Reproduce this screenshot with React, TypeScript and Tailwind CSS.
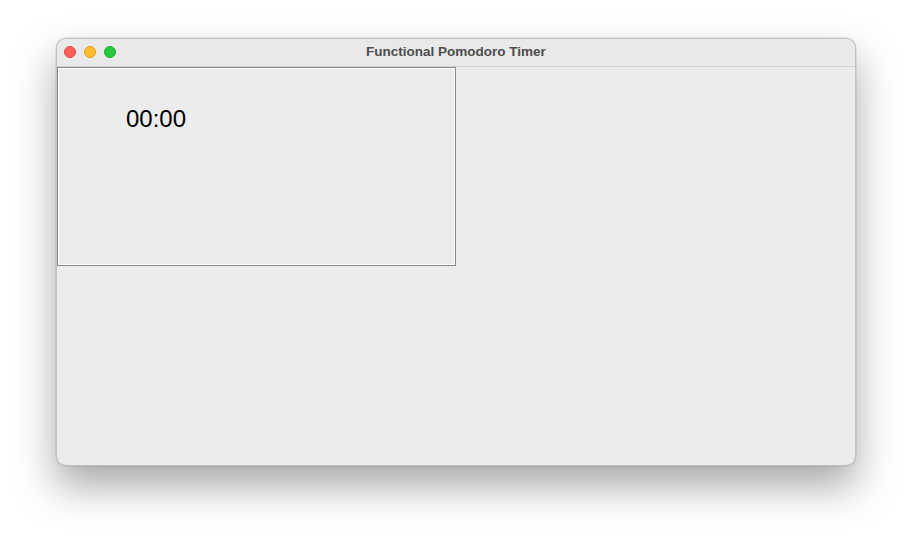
export default function App() {
  return (
    <div className="w-[912px] h-[540px] bg-white pt-[38px] pl-[56px]" style={{ fontFamily: '"Liberation Sans", Arial, sans-serif' }}>
      <div className="w-[800px] h-[428px] rounded-[10px] bg-[#ececec] border border-[#c2c2c2] overflow-hidden flex flex-col shadow-[0_20px_40px_rgba(0,0,0,0.35),0_0_0_0.5px_rgba(0,0,0,0.15)]">
        {/* title bar */}
        <div className="h-[28px] shrink-0 bg-[#e9e9e9] border-b border-[#d1d1d1] relative flex items-center justify-center pb-[1px]">
          <div className="absolute left-[7px] top-[7px] flex gap-[8px]">
            <span className="w-[12px] h-[12px] rounded-full bg-[#ff5f57] border border-[#e2463f]" />
            <span className="w-[12px] h-[12px] rounded-full bg-[#febc2e] border border-[#e1a116]" />
            <span className="w-[12px] h-[12px] rounded-full bg-[#28c840] border border-[#1aab29]" />
          </div>
          <span className="text-[13.5px] font-bold text-[#4d4d4d]">Functional Pomodoro Timer</span>
        </div>
        {/* content */}
        <div className="flex-1">
          <div className="w-[399px] h-[199px] border border-[#8a8a8a] shadow-[inset_1px_1px_0_#ffffff,inset_-1px_-1px_0_#ffffff] pl-[68px] pt-[39px]">
            <span className="text-[24px] leading-none text-black">00:00</span>
          </div>
        </div>
      </div>
    </div>
  );
}
